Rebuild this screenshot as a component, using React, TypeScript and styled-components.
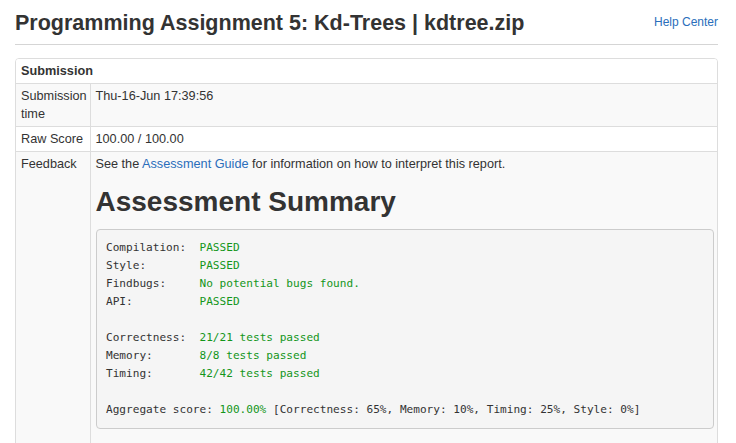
import React from "react";
import styled, { createGlobalStyle } from "styled-components";

const GlobalStyle = createGlobalStyle`
  body {
    margin: 0;
    background: #fff;
    color: #333;
    font-family: "Liberation Sans", Arial, sans-serif;
    font-size: 12.7px;
    line-height: 18px;
  }
`;

const Page = styled.div`
  padding: 0 18px 0 15px;
`;

const Header = styled.div`
  display: flex;
  align-items: center;
  justify-content: space-between;
  border-bottom: 1px solid #d5d5d5;
  margin-bottom: 13px;
`;

const Title = styled.h1`
  margin: 12px 0 8px;
  font-size: 21.5px;
  line-height: 1.1;
  font-weight: bold;
  color: #333;
`;

const Link = styled.a`
  color: #2a6ebb;
  text-decoration: none;
  cursor: pointer;
`;

const HelpLink = styled(Link)`
  font-size: 12px;
`;

const Panel = styled.div`
  border: 1px solid #ddd;
  border-radius: 4px;
  overflow: hidden;
`;

const Table = styled.table`
  width: 100%;
  border-collapse: collapse;
  table-layout: fixed;
`;

const LabelCol = styled.col`
  width: 74px;
`;

const Row = styled.tr<{ $striped?: boolean }>`
  background: ${(p) => (p.$striped ? "#f9f9f9" : "#fff")};
`;

const HeadCell = styled.th`
  text-align: left;
  font-weight: bold;
  padding: 3px 5px;
`;

const Label = styled.td`
  padding: 3px 3px 3px 5px;
  vertical-align: top;
  border-top: 1px solid #ddd;
  border-right: 1px solid #ddd;
`;

const Value = styled.td`
  padding: 3px 3px 3px 5px;
  vertical-align: top;
  border-top: 1px solid #ddd;
`;

const SummaryTitle = styled.h1`
  margin: 14px 0 12px;
  font-size: 28px;
  line-height: 1.1;
  font-weight: bold;
  color: #333;
`;

const Report = styled.pre`
  margin: 0 0 24px;
  padding: 9px 9.5px;
  background: #f5f5f5;
  border: 1px solid #ccc;
  border-radius: 4px;
  font-family: "DejaVu Sans Mono", "Liberation Mono", monospace;
  font-size: 11.1px;
  line-height: 18px;
  color: #333;
  white-space: pre;
`;

const Pass = styled.span`
  color: #13961a;
`;

const checks: [string, string][] = [
  ["Compilation:  ", "PASSED"],
  ["Style:        ", "PASSED"],
  ["Findbugs:     ", "No potential bugs found."],
  ["API:          ", "PASSED"],
];

const tests: [string, string][] = [
  ["Correctness:  ", "21/21 tests passed"],
  ["Memory:       ", "8/8 tests passed"],
  ["Timing:       ", "42/42 tests passed"],
];

const App: React.FC = () => {
  return (
    <Page>
      <GlobalStyle />
      <Header>
        <Title>Programming Assignment 5: Kd-Trees | kdtree.zip</Title>
        <HelpLink>Help Center</HelpLink>
      </Header>
      <Panel>
        <Table>
          <colgroup>
            <LabelCol />
            <col />
          </colgroup>
          <tbody>
            <Row>
              <HeadCell colSpan={2}>Submission</HeadCell>
            </Row>
            <Row $striped>
              <Label>Submission time</Label>
              <Value>Thu-16-Jun 17:39:56</Value>
            </Row>
            <Row>
              <Label>Raw Score</Label>
              <Value>100.00 / 100.00</Value>
            </Row>
            <Row $striped>
              <Label>Feedback</Label>
              <Value>
                See the <Link>Assessment Guide</Link> for information on how to
                interpret this report.
                <SummaryTitle>Assessment Summary</SummaryTitle>
                <Report>
                  {checks.map(([k, v]) => (
                    <React.Fragment key={k}>
                      {k}
                      <Pass>{v}</Pass>
                      {"\n"}
                    </React.Fragment>
                  ))}
                  {"\n"}
                  {tests.map(([k, v]) => (
                    <React.Fragment key={k}>
                      {k}
                      <Pass>{v}</Pass>
                      {"\n"}
                    </React.Fragment>
                  ))}
                  {"\n"}
                  {"Aggregate score: "}
                  <Pass>100.00%</Pass>
                  {" [Correctness: 65%, Memory: 10%, Timing: 25%, Style: 0%]"}
                </Report>
              </Value>
            </Row>
          </tbody>
        </Table>
      </Panel>
    </Page>
  );
};

export default App;
